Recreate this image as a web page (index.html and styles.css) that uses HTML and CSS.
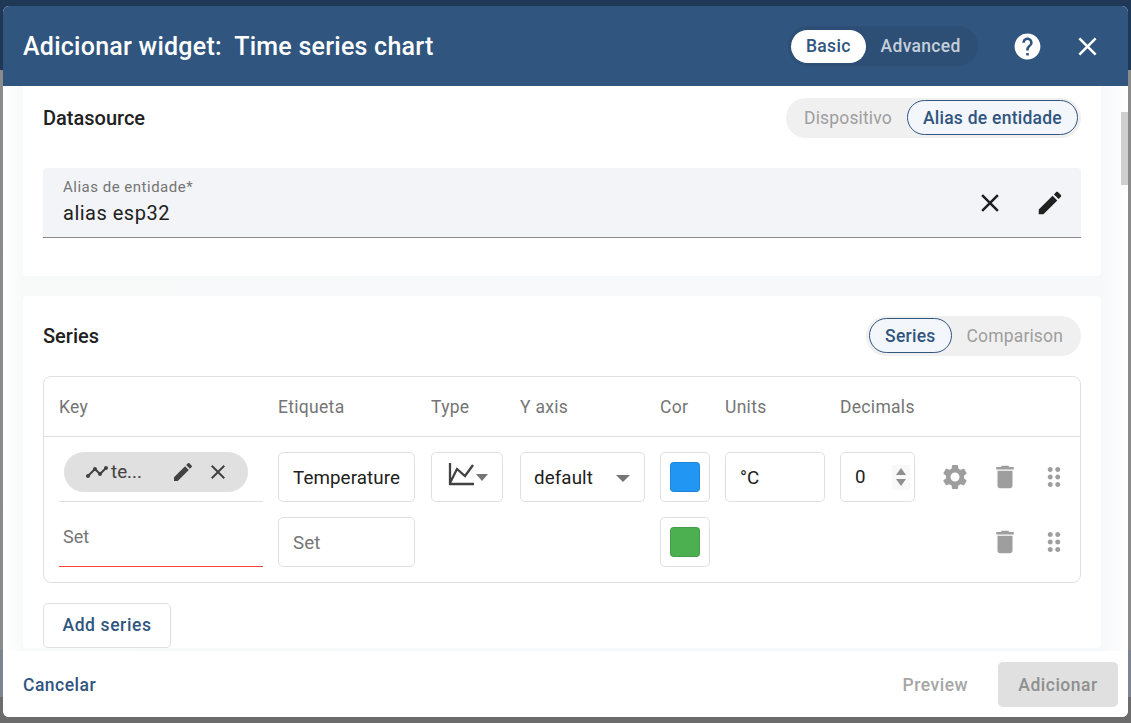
FILE: index.html
```html
<!DOCTYPE html>
<html lang="pt">
<head>
    <meta charset="UTF-8">
    <title>Adicionar widget</title>
    <link rel="stylesheet" href="styles.css">
</head>
<body>
<div class="backdrop">
    <div class="dialog">
        <div class="dialog-head">
            <h1 class="dialog-title">Adicionar widget:&nbsp; Time series chart</h1>
            <div class="mode-toggle">
                <span class="mode-opt mode-on">Basic</span>
                <span class="mode-opt">Advanced</span>
            </div>
            <svg class="head-help" viewBox="0 0 24 24"><path d="M12 2C6.48 2 2 6.48 2 12s4.48 10 10 10 10-4.48 10-10S17.52 2 12 2zm1 17h-2v-2h2v2zm2.07-7.75l-.9.92C13.45 12.9 13 13.5 13 15h-2v-.5c0-1.1.45-2.1 1.17-2.83l1.24-1.26c.37-.36.59-.86.59-1.41 0-1.1-.9-2-2-2s-2 .9-2 2H8c0-2.21 1.79-4 4-4s4 1.79 4 4c0 .88-.36 1.68-.93 2.25z"/></svg>
            <svg class="head-close" viewBox="0 0 24 24"><path d="M19 6.41L17.59 5 12 10.59 6.41 5 5 6.41 10.59 12 5 17.59 6.41 19 12 13.41 17.59 19 19 17.59 13.41 12z"/></svg>
        </div>

        <div class="dialog-body">
            <div class="card card-source">
                <div class="card-head">
                    <h2 class="card-title">Datasource</h2>
                    <div class="toggle">
                        <span class="toggle-opt">Dispositivo</span>
                        <span class="toggle-opt toggle-on">Alias de entidade</span>
                    </div>
                </div>
                <div class="alias-field">
                    <div class="alias-text">
                        <div class="alias-label">Alias de entidade*</div>
                        <div class="alias-value">alias esp32</div>
                    </div>
                    <svg class="alias-icon" viewBox="0 0 24 24"><path d="M19 6.41L17.59 5 12 10.59 6.41 5 5 6.41 10.59 12 5 17.59 6.41 19 12 13.41 17.59 19 19 17.59 13.41 12z"/></svg>
                    <svg class="alias-icon" viewBox="0 0 24 24"><path d="M3 17.25V21h3.75L17.81 9.94l-3.75-3.75L3 17.25zM20.71 7.04c.39-.39.39-1.02 0-1.41l-2.34-2.34c-.39-.39-1.02-.39-1.41 0l-1.83 1.83 3.75 3.75 1.83-1.83z"/></svg>
                </div>
            </div>

            <div class="card card-series">
                <div class="card-head">
                    <h2 class="card-title">Series</h2>
                    <div class="toggle">
                        <span class="toggle-opt toggle-on">Series</span>
                        <span class="toggle-opt">Comparison</span>
                    </div>
                </div>

                <div class="series-table">
                    <div class="series-grid series-header">
                        <span>Key</span>
                        <span>Etiqueta</span>
                        <span>Type</span>
                        <span>Y axis</span>
                        <span>Cor</span>
                        <span>Units</span>
                        <span>Decimals</span>
                    </div>

                    <div class="series-grid series-row">
                        <div class="key-cell">
                            <div class="chip">
                                <svg class="chip-line" viewBox="0 0 24 24"><path d="M23 8c0 1.1-.9 2-2 2-.18 0-.35-.02-.51-.07l-3.56 3.55c.05.16.07.34.07.52 0 1.1-.9 2-2 2s-2-.9-2-2c0-.18.02-.36.07-.52l-2.55-2.55c-.16.05-.34.07-.52.07s-.36-.02-.52-.07l-4.55 4.56c.05.16.07.33.07.51 0 1.1-.9 2-2 2s-2-.9-2-2 .9-2 2-2c.18 0 .35.02.51.07l4.56-4.55C8.02 9.36 8 9.18 8 9c0-1.1.9-2 2-2s2 .9 2 2c0 .18-.02.36-.07.52l2.55 2.55c.16-.05.34-.07.52-.07s.36.02.52.07l3.55-3.56C19.02 8.35 19 8.18 19 8c0-1.1.9-2 2-2s2 .9 2 2z"/></svg>
                                <span class="chip-text">te...</span>
                                <svg class="chip-edit" viewBox="0 0 24 24"><path d="M3 17.25V21h3.75L17.81 9.94l-3.75-3.75L3 17.25zM20.71 7.04c.39-.39.39-1.02 0-1.41l-2.34-2.34c-.39-.39-1.02-.39-1.41 0l-1.83 1.83 3.75 3.75 1.83-1.83z"/></svg>
                                <svg class="chip-close" viewBox="0 0 24 24"><path d="M19 6.41L17.59 5 12 10.59 6.41 5 5 6.41 10.59 12 5 17.59 6.41 19 12 13.41 17.59 19 19 17.59 13.41 12z"/></svg>
                            </div>
                        </div>
                        <div class="box box-text">Temperature</div>
                        <div class="box box-type">
                            <svg class="type-icon" viewBox="0 0 26 23"><path d="M2 0v21h24M2 20L9 6l8 7 8-11" fill="none" stroke="#424242" stroke-width="2.300"/></svg>
                            <i class="arrow"></i>
                        </div>
                        <div class="box box-select">default<i class="arrow"></i></div>
                        <div class="box box-color"><span class="swatch swatch-blue"></span></div>
                        <div class="box box-text">°C</div>
                        <div class="box box-num">0
                            <span class="stepper"><i class="step-up"></i><i class="step-down"></i></span>
                        </div>
                        <div class="row-actions">
                            <svg class="act-icon" viewBox="0 0 24 24"><path d="M19.14 12.94c.04-.3.06-.61.06-.94 0-.32-.02-.64-.07-.94l2.03-1.58c.18-.14.23-.41.12-.61l-1.92-3.32c-.12-.22-.37-.29-.59-.22l-2.39.96c-.5-.38-1.03-.7-1.62-.94l-.36-2.54c-.04-.24-.24-.41-.48-.41h-3.84c-.24 0-.43.17-.47.41l-.36 2.54c-.59.24-1.13.57-1.62.94l-2.39-.96c-.22-.08-.47 0-.59.22L2.74 8.87c-.12.21-.08.47.12.61l2.03 1.58c-.05.3-.09.63-.09.94s.02.64.07.94l-2.03 1.58c-.18.14-.23.41-.12.61l1.92 3.32c.12.22.37.29.59.22l2.39-.96c.5.38 1.03.7 1.62.94l.36 2.54c.05.24.24.41.48.41h3.84c.24 0 .44-.17.47-.41l.36-2.54c.59-.24 1.13-.56 1.62-.94l2.39.96c.22.08.47 0 .59-.22l1.92-3.32c.12-.22.07-.47-.12-.61l-2.01-1.58zM12 15.6c-1.98 0-3.6-1.62-3.6-3.6s1.62-3.6 3.6-3.6 3.6 1.62 3.6 3.6-1.62 3.6-3.6 3.6z"/></svg>
                            <svg class="act-icon" viewBox="0 0 24 24"><path d="M6 19c0 1.1.9 2 2 2h8c1.1 0 2-.9 2-2V7H6v12zM19 4h-3.5l-1-1h-5l-1 1H5v2h14V4z"/></svg>
                            <svg class="act-icon act-drag" viewBox="0 0 24 24"><path d="M11 18c0 1.1-.9 2-2 2s-2-.9-2-2 .9-2 2-2 2 .9 2 2zm-2-8c-1.1 0-2 .9-2 2s.9 2 2 2 2-.9 2-2-.9-2-2-2zm0-6c-1.1 0-2 .9-2 2s.9 2 2 2 2-.9 2-2-.9-2-2-2zm6 4c1.1 0 2-.9 2-2s-.9-2-2-2-2 .9-2 2 .9 2 2 2zm0 2c-1.1 0-2 .9-2 2s.9 2 2 2 2-.9 2-2-.9-2-2-2zm0 6c-1.1 0-2 .9-2 2s.9 2 2 2 2-.9 2-2-.9-2-2-2z"/></svg>
                        </div>
                    </div>

                    <div class="series-grid series-row">
                        <div class="key-cell key-empty"><span class="key-hint">Set</span></div>
                        <div class="box box-text box-hint">Set</div>
                        <div></div>
                        <div></div>
                        <div class="box box-color"><span class="swatch swatch-green"></span></div>
                        <div></div>
                        <div></div>
                        <div class="row-actions">
                            <span class="act-blank"></span>
                            <svg class="act-icon" viewBox="0 0 24 24"><path d="M6 19c0 1.1.9 2 2 2h8c1.1 0 2-.9 2-2V7H6v12zM19 4h-3.5l-1-1h-5l-1 1H5v2h14V4z"/></svg>
                            <svg class="act-icon act-drag" viewBox="0 0 24 24"><path d="M11 18c0 1.1-.9 2-2 2s-2-.9-2-2 .9-2 2-2 2 .9 2 2zm-2-8c-1.1 0-2 .9-2 2s.9 2 2 2 2-.9 2-2-.9-2-2-2zm0-6c-1.1 0-2 .9-2 2s.9 2 2 2 2-.9 2-2-.9-2-2-2zm6 4c1.1 0 2-.9 2-2s-.9-2-2-2-2 .9-2 2 .9 2 2 2zm0 2c-1.1 0-2 .9-2 2s.9 2 2 2 2-.9 2-2-.9-2-2-2zm0 6c-1.1 0-2 .9-2 2s.9 2 2 2 2-.9 2-2-.9-2-2-2z"/></svg>
                        </div>
                    </div>
                </div>

                <button class="add-btn">Add series</button>
            </div>

            <div class="scroll-thumb"></div>
        </div>

        <div class="dialog-foot">
            <button class="foot-btn foot-cancel">Cancelar</button>
            <button class="foot-btn foot-preview">Preview</button>
            <button class="foot-btn foot-add">Adicionar</button>
        </div>
    </div>
</div>
</body>
</html>
```

FILE: styles.css
```css
*{
    margin: 0;
    padding: 0;
    box-sizing: border-box;
}
html,body{
    height: 100%;
    overflow: hidden;
}
body{
    font-family: Roboto, "Liberation Sans", sans-serif;
    color: #212121;
}
button{
    font-family: inherit;
    border: none;
    background: none;
}
.backdrop{
    height: 723px;
    padding: 6px 3px;
    background: linear-gradient(180deg, #1f3855 0, #1f3855 70px, #8b8b8b 70px, #8b8b8b 650px, #7f8493 650px, #7f8493 697px, #6c6c6c 697px);
}
.dialog{
    height: 711px;
    display: flex;
    flex-direction: column;
    border-radius: 6px;
    overflow: hidden;
    background: #fff;
}

/* header */
.dialog-head{
    flex: none;
    height: 80px;
    display: flex;
    align-items: center;
    padding: 0 20px;
    background: #30557f;
    color: #fff;
}
.dialog-title{
    flex: 1;
    font-size: 25px;
    font-weight: 500;
    letter-spacing: .25px;
}
.mode-toggle{
    display: flex;
    align-items: center;
    width: 190px;
    height: 40px;
    padding: 0 3px;
    margin-right: 34px;
    border-radius: 20px;
    background: #2d4f76;
}
.mode-opt{
    font-size: 17.500px;
    font-weight: 500;
    letter-spacing: .3px;
    color: #c6cfda;
    height: 33px;
    line-height: 33px;
    padding: 0 15px;
    border-radius: 17px;
}
.mode-on{
    background: #fff;
    color: #30557f;
}
.head-help{
    width: 31px;
    height: 31px;
    fill: #fff;
    margin-right: 29px;
}
.head-close{
    width: 31px;
    height: 31px;
    fill: #fff;
    margin-right: 5px;
}

/* scrolling area */
.dialog-body{
    flex: 1;
    min-height: 0;
    position: relative;
    overflow: hidden;
    display: flex;
    flex-direction: column;
    gap: 20px;
    padding: 0 27px 0 20px;
    background: linear-gradient(90deg, #fff 0, #f8f9f9 20px, #f7f8fa calc(100% - 27px), #fff 100%);
}
.scroll-thumb{
    position: absolute;
    right: 0;
    top: 26px;
    width: 7px;
    height: 73px;
    background: #cfcfcf;
}
.card{
    flex: none;
    background: #fff;
    border-radius: 4px;
    padding: 0 20px;
}
.card-source{
    height: 190px;
    padding-top: 12px;
    border-radius: 0 0 4px 4px;
}
.card-series{
    padding-top: 20px;
}
.card-head{
    display: flex;
    align-items: center;
    justify-content: space-between;
    height: 40px;
}
.card-title{
    font-size: 20px;
    font-weight: 500;
}
.toggle{
    display: flex;
    align-items: flex-start;
    height: 40px;
    padding: 2px 3px 0;
    border-radius: 20px;
    background: #f0f0f0;
}
.toggle-opt{
    font-size: 17.500px;
    letter-spacing: .15px;
    color: #9e9e9e;
    height: 35px;
    line-height: 35px;
    padding: 0 14px;
    border: 1px solid transparent;
    border-radius: 18px;
}
.toggle-on{
    font-weight: 500;
    letter-spacing: .25px;
    padding: 0 15px;
    color: #30557f;
    background: #f3f6fb;
    border-color: #30557f;
}

/* entity alias field */
.alias-field{
    display: flex;
    align-items: center;
    gap: 30px;
    height: 70px;
    margin-top: 30px;
    padding: 0 16px 0 20px;
    background: #f3f4f8;
    border-bottom: 1px solid #8a8a8a;
    border-radius: 4px 4px 0 0;
}
.alias-text{
    flex: 1;
    margin-top: -2px;
}
.alias-label{
    font-size: 15px;
    letter-spacing: .5px;
    color: #757575;
}
.alias-value{
    font-size: 20px;
    letter-spacing: .5px;
    margin-top: 5px;
}
.alias-icon{
    width: 30px;
    height: 30px;
    fill: #212121;
}

/* series table */
.series-table{
    margin-top: 20px;
    border: 1px solid #e0e0e0;
    border-radius: 8px;
    height: 207px;
}
.series-grid{
    display: grid;
    grid-template-columns: 204px 138px 74px 125px 50px 100px 75px 1fr;
    column-gap: 15px;
    padding: 0 15px;
}
.series-header{
    height: 60px;
    align-items: center;
    font-size: 17.500px;
    letter-spacing: .3px;
    color: #757575;
    border-bottom: 1px solid #e0e0e0;
    margin-bottom: 15px;
}
.series-row{
    height: 50px;
    margin-bottom: 15px;
}
.key-cell{
    height: 50px;
    border-bottom: 1px solid #e0e0e0;
}
.key-empty{
    border-bottom-color: #f44336;
    padding: 9px 0 0 4px;
}
.key-hint{
    font-size: 18px;
    color: #757575;
}
.chip{
    display: flex;
    align-items: center;
    width: 184px;
    height: 40px;
    margin-left: 5px;
    padding-left: 21px;
    border-radius: 20px;
    background: #e0e0e0;
    font-size: 18.750px;
    color: #424242;
}
.chip-line{
    width: 24px;
    height: 24px;
    fill: #424242;
    flex: none;
}
.chip-text{
    width: 60px;
    margin-left: 2px;
}
.chip-edit{
    width: 24px;
    height: 24px;
    fill: #424242;
    flex: none;
}
.chip-close{
    width: 24px;
    height: 24px;
    fill: #424242;
    flex: none;
    margin-left: 11px;
}
.box{
    height: 50px;
    border: 1px solid #e0e0e0;
    border-radius: 5px;
    display: flex;
    align-items: center;
    font-size: 18.750px;
    letter-spacing: .1px;
    background: #fff;
}
.box-text{
    width: 137px;
    padding: 2px 0 0 14px;
}
.series-row .box-text:nth-child(6){
    width: 100px;
}
.box-hint{
    color: #757575;
}
.box-type{
    width: 72px;
    padding-left: 16px;
}
.type-icon{
    width: 26px;
    height: 23px;
    flex: none;
    margin-bottom: 5px;
}
.arrow{
    display: block;
    width: 0;
    height: 0;
    border-left: 7px solid transparent;
    border-right: 7px solid transparent;
    border-top: 7px solid #757575;
}
.box-type .arrow{
    margin: 0 0 0 2px;
    border-left-width: 6.500px;
    border-right-width: 6.500px;
}
.box-select{
    padding: 2px 14px 0 13px;
    justify-content: space-between;
}
.box-color{
    justify-content: center;
}
.swatch{
    display: block;
    width: 30px;
    height: 30px;
    border-radius: 4px;
    border: 1px solid rgba(0, 0, 0, .1);
}
.swatch-blue{
    background: #2196f3;
}
.swatch-green{
    background: #4caf50;
}
.box-num{
    padding: 0 4px 0 14px;
    justify-content: space-between;
}
.stepper{
    display: flex;
    flex-direction: column;
    align-items: center;
    justify-content: center;
    gap: 4px;
    width: 18px;
    height: 25px;
    background: #f8f8f8;
}
.stepper i{
    display: block;
    width: 0;
    height: 0;
    border-left: 5.500px solid transparent;
    border-right: 5.500px solid transparent;
}
.step-up{
    border-bottom: 7px solid #8f8f8f;
}
.step-down{
    border-top: 7px solid #8f8f8f;
}
.row-actions{
    display: flex;
    align-items: center;
    gap: 20px;
    padding-left: 10px;
}
.act-icon{
    width: 30px;
    height: 30px;
    fill: #9e9e9e;
    flex: none;
}
.act-drag{
    margin-left: -1px;
}
.act-blank{
    width: 30px;
    flex: none;
}
.add-btn{
    display: block;
    width: 128px;
    height: 45px;
    margin-top: 20px;
    padding-bottom: 2px;
    border: 1px solid #e0e0e0;
    border-radius: 5px;
    font-size: 17.500px;
    font-weight: 500;
    letter-spacing: .6px;
    color: #30557f;
}

/* footer */
.dialog-foot{
    flex: none;
    position: relative;
    height: 66px;
    display: flex;
    align-items: center;
    padding: 0 10px 0 20px;
    background: #fff;
}
.foot-btn{
    font-size: 17.500px;
    font-weight: 500;
    letter-spacing: .5px;
    padding-top: 1px;
}
.foot-cancel{
    color: #30557f;
    margin-right: auto;
}
.foot-preview{
    color: #a6a6a6;
    margin-right: 30px;
}
.foot-add{
    width: 120px;
    height: 45px;
    border-radius: 5px;
    background: #e0e0e0;
    color: #8f8f8f;
}
```
